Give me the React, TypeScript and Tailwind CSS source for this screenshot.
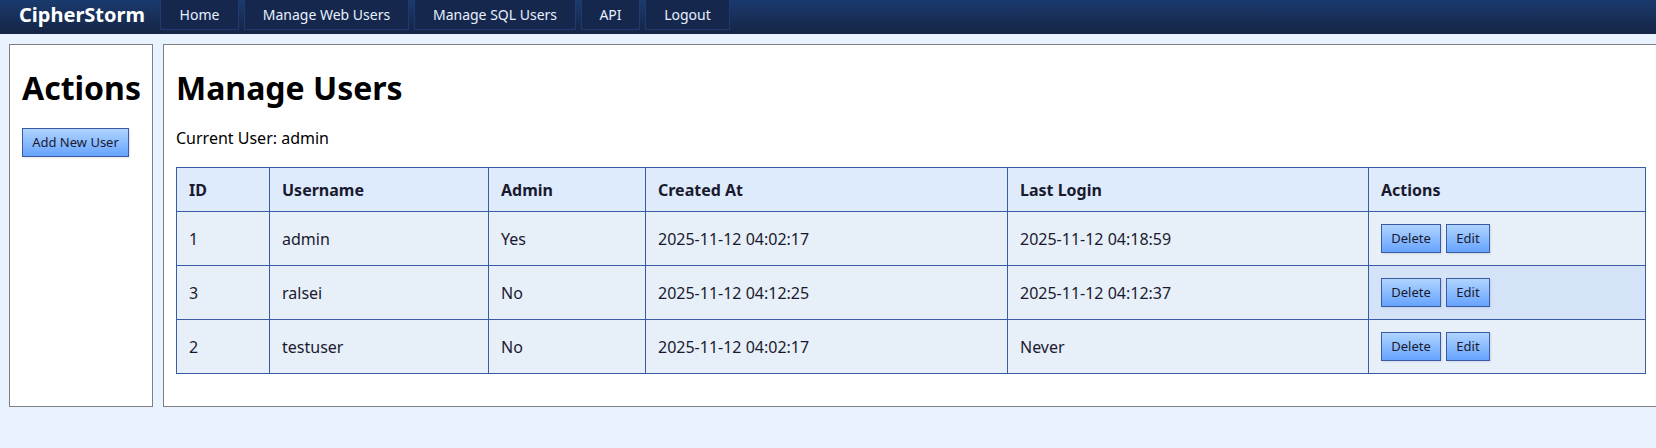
const navLinks = [
  { label: 'Home', width: 'w-[79px]' },
  { label: 'Manage Web Users', width: 'w-[165px]' },
  { label: 'Manage SQL Users', width: 'w-[162px]' },
  { label: 'API', width: 'w-[59px]' },
  { label: 'Logout', width: 'w-[85px]' },
];

const users = [
  { id: 1, username: 'admin', admin: 'Yes', createdAt: '2025-11-12 04:02:17', lastLogin: '2025-11-12 04:18:59' },
  { id: 3, username: 'ralsei', admin: 'No', createdAt: '2025-11-12 04:12:25', lastLogin: '2025-11-12 04:12:37' },
  { id: 2, username: 'testuser', admin: 'No', createdAt: '2025-11-12 04:02:17', lastLogin: 'Never' },
];

const headers = ['ID', 'Username', 'Admin', 'Created At', 'Last Login', 'Actions'];

const btn =
  'h-[29px] border border-[#3b5ba5] bg-gradient-to-b from-[#b0d4ff] to-[#66a3ff] text-[13px] leading-none text-[#1a1a2e] shadow-[1px_1px_2px_rgba(0,0,0,0.1)]';
const th = 'border border-[#3b5ba5] px-3 text-left font-bold text-[#1a1a2e]';
const td = 'border border-[#3b5ba5] px-3 text-left font-normal text-[#1a1a2e]';

export default function App() {
  return (
    <div className="h-[448px] w-[1656px] overflow-hidden bg-[#e8f3ff] font-['Noto_Sans',sans-serif] text-[16px] text-black">
      {/* Navbar */}
      <nav className="flex h-[34px] bg-gradient-to-b from-[#1a3a6e] to-[#152545]">
        <div className="flex h-[30px] w-[160px] items-center pl-[19px] text-[20px] font-bold text-white">CipherStorm</div>
        <div className="flex gap-[5px]">
          {navLinks.map((link) => (
            <a
              key={link.label}
              className={`flex h-[30px] items-center justify-center border border-t-0 border-[#1e3a6e] bg-[#16274d] text-[14px] text-[#e6f0ff] ${link.width}`}
            >
              {link.label}
            </a>
          ))}
        </div>
      </nav>

      <div className="flex gap-[10px] pl-[9px] pt-[10px]">
        {/* Sidebar */}
        <aside className="h-[363px] w-[144px] shrink-0 border border-[#808080] bg-white pl-[12px] pt-[21px]">
          <h2 className="text-[32px] font-bold leading-[44px]">Actions</h2>
          <button className={`${btn} mt-[18px] w-[107px]`}>Add New User</button>
        </aside>

        {/* Main */}
        <main className="h-[363px] w-[1560px] shrink-0 border border-[#808080] bg-white pl-[12px] pt-[21px]">
          <h1 className="text-[32px] font-bold leading-[44px]">Manage Users</h1>
          <p className="mt-[17px] text-[16px] leading-[22px]">Current User: admin</p>
          <table className="mt-[18px] w-[1469px] table-fixed border-collapse">
            <colgroup>
              <col className="w-[93px]" />
              <col className="w-[219px]" />
              <col className="w-[157px]" />
              <col className="w-[362px]" />
              <col className="w-[361px]" />
              <col className="w-[277px]" />
            </colgroup>
            <thead>
              <tr className="h-[44px] bg-[#deebfd]">
                {headers.map((h) => (
                  <th key={h} className={th}>
                    {h}
                  </th>
                ))}
              </tr>
            </thead>
            <tbody>
              {users.map((user) => (
                <tr key={user.id} className="h-[54px] bg-[#e7eff9]">
                  <td className={td}>{user.id}</td>
                  <td className={td}>{user.username}</td>
                  <td className={td}>{user.admin}</td>
                  <td className={td}>{user.createdAt}</td>
                  <td className={td}>{user.lastLogin}</td>
                  <td className={`${td} ${user.id === 3 ? 'bg-[#d5e3f9]' : ''}`}>
                    <div className="flex gap-[5px]">
                      <button className={`${btn} w-[60px]`}>Delete</button>
                      <button className={`${btn} w-[44px]`}>Edit</button>
                    </div>
                  </td>
                </tr>
              ))}
            </tbody>
          </table>
        </main>
      </div>
    </div>
  );
}
